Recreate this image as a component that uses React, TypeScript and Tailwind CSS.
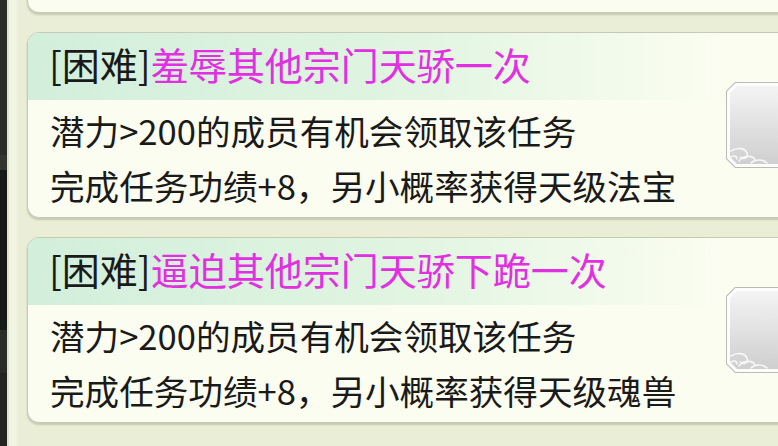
import React from "react";

const FONT = '"Noto Sans CJK SC", "Noto Sans", sans-serif';

type Task = { title: string; line1: string; line2: string };

const tasks: Task[] = [
  { title: "", line1: "", line2: "" },
  { title: "羞辱其他宗门天骄一次", line1: "潜力>200的成员有机会领取该任务", line2: "完成任务功绩+8，另小概率获得天级法宝" },
  { title: "逼迫其他宗门天骄下跪一次", line1: "潜力>200的成员有机会领取该任务", line2: "完成任务功绩+8，另小概率获得天级魂兽" },
];

function ButtonShape() {
  return (
    <svg width="92" height="88" viewBox="0 0 92 88">
      <defs>
        <linearGradient id="btnG" x1="0" y1="0" x2="0" y2="1">
          <stop offset="0" stopColor="#f4f4f4" />
          <stop offset="1" stopColor="#cfcfcf" />
        </linearGradient>
      </defs>
      <polygon points="10,1 92,1 92,87 10,87 1,78 1,10" fill="#b9bcb4" />
      <polygon points="10.5,2 92,2 92,86 10.5,86 2,77.5 2,10.5" fill="#fdfdfd" />
      <polygon points="12,5 92,5 92,83 12,83 5,76 5,12" fill="url(#btnG)" />
      <g fill="none" stroke="#f7f7f7" strokeWidth="1.6" strokeLinecap="round">
        <path d="M6 70 C 12 66, 20 67, 22 72 C 24 77, 18 79, 15 76" />
        <path d="M14 80 C 18 74, 28 74, 30 79" />
        <path d="M26 82 C 30 78, 38 78, 42 82" />
        <path d="M6 76 C 9 74, 12 75, 12 78" />
      </g>
    </svg>
  );
}

function Card({ task }: { task: Task }) {
  return (
    <div className="flex w-[790px] h-[186px] rounded-[12px] border border-[#c6c9b6] bg-[#fbfdf1] shadow-[0_2px_2px_rgba(90,95,70,0.25)] overflow-hidden">
      <div className="flex flex-col w-[697px] shrink-0">
        <div className="h-[67px] flex items-center pl-[21px] pb-[5px] bg-gradient-to-r from-[#d2efdc] via-[#dff4e0] to-[#fbfdf1] text-[38px] leading-none whitespace-nowrap">
          {task.title && (
            <>
              <span className="text-[#1a1a1a]">[困难]</span>
              <span className="text-[#e32fe2]">{task.title}</span>
            </>
          )}
        </div>
        <div className="pl-[22px] pt-[3px] h-[118px] text-[34.6px] leading-[55px] text-[#1a1a1a] whitespace-nowrap">
          {task.line1 && <div>{task.line1}</div>}
          {task.line2 && <div>{task.line2}</div>}
        </div>
      </div>
      <div className="flex items-center">
        <ButtonShape />
      </div>
    </div>
  );
}

export default function App() {
  return (
    <div className="w-[778px] h-[446px] overflow-hidden flex bg-[#ebeed6]" style={{ fontFamily: FONT }}>
      <div className="w-[7px] flex flex-col shrink-0">
        <div className="h-[155px] bg-[#2a2c28]" />
        <div className="h-[15px] bg-[#33362f]" />
        <div className="h-[160px] bg-[#151a18]" />
        <div className="h-[43px] bg-[#2a2c28]" />
        <div className="flex-1 bg-[#232420]" />
      </div>
      <div className="w-[2px] bg-[#dfe2cc] shrink-0" />
      <div className="w-[8px] bg-[#f1f4e0] shrink-0" />
      <div className="flex flex-col gap-[19px] pl-[10px] -mt-[173px]">
        {tasks.map((t, i) => (
          <Card key={i} task={t} />
        ))}
      </div>
    </div>
  );
}
